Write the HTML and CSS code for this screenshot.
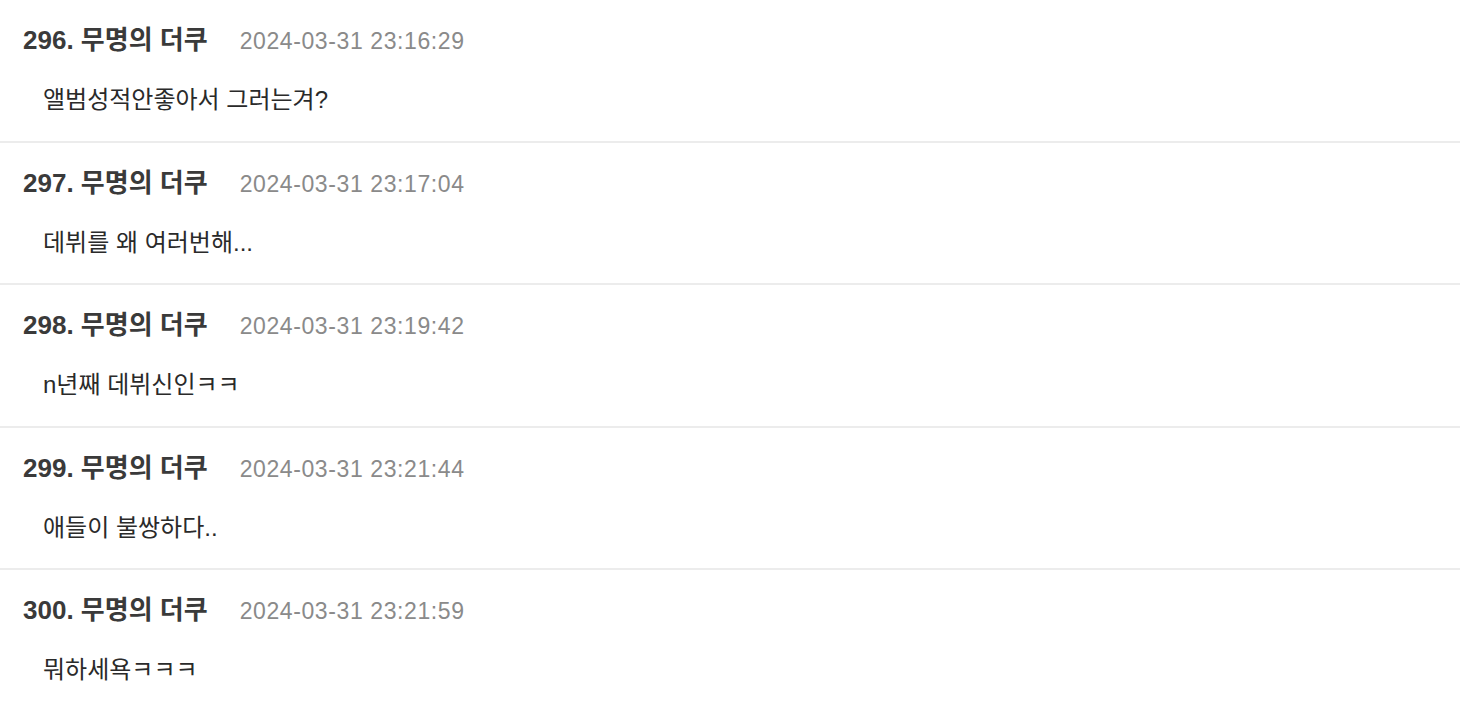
FILE: index.html
```html
<!DOCTYPE html>
<html lang="ko">
<head>
<meta charset="utf-8">
<link rel="stylesheet" href="styles.css">
</head>
<body>
<ul class="comments">
  <li class="comment">
    <div class="head"><span class="name">296. 무명의 더쿠</span><span class="date">2024-03-31 23:16:29</span></div>
    <div class="body">앨범성적안좋아서 그러는겨?</div>
  </li>
  <li class="comment">
    <div class="head"><span class="name">297. 무명의 더쿠</span><span class="date">2024-03-31 23:17:04</span></div>
    <div class="body">데뷔를 왜 여러번해...</div>
  </li>
  <li class="comment">
    <div class="head"><span class="name">298. 무명의 더쿠</span><span class="date">2024-03-31 23:19:42</span></div>
    <div class="body">n년째 데뷔신인ㅋㅋ</div>
  </li>
  <li class="comment">
    <div class="head"><span class="name">299. 무명의 더쿠</span><span class="date">2024-03-31 23:21:44</span></div>
    <div class="body">애들이 불쌍하다..</div>
  </li>
  <li class="comment last">
    <div class="head"><span class="name">300. 무명의 더쿠</span><span class="date">2024-03-31 23:21:59</span></div>
    <div class="body">뭐하세욕ㅋㅋㅋ</div>
  </li>
</ul>
</body>
</html>
```

FILE: styles.css
```css
* { box-sizing: border-box; }
html, body {
  margin: 0;
  padding: 0;
  background: #fff;
}
body {
  font-family: "Liberation Sans", "Noto Sans CJK KR", sans-serif;
  color: #333;
}
.comments {
  list-style: none;
  margin: 0;
  padding: 0;
}
.comment {
  padding: 26px 23px 26.5px;
  border-bottom: 2px solid #ececec;
}
.comment.last {
  border-bottom: none;
}
.head {
  display: flex;
  align-items: baseline;
  height: 28px;
  line-height: 28px;
  white-space: nowrap;
}
.name {
  font-size: 26px;
  font-weight: bold;
  color: #3a3a3a;
}
.date {
  margin-left: 32px;
  font-size: 23px;
  letter-spacing: 0.6px;
  color: #8a8a8a;
}
.body {
  margin-top: 32px;
  padding-left: 20px;
  height: 28px;
  font-size: 24px;
  line-height: 28px;
  color: #2a2a2a;
  white-space: nowrap;
}
```
